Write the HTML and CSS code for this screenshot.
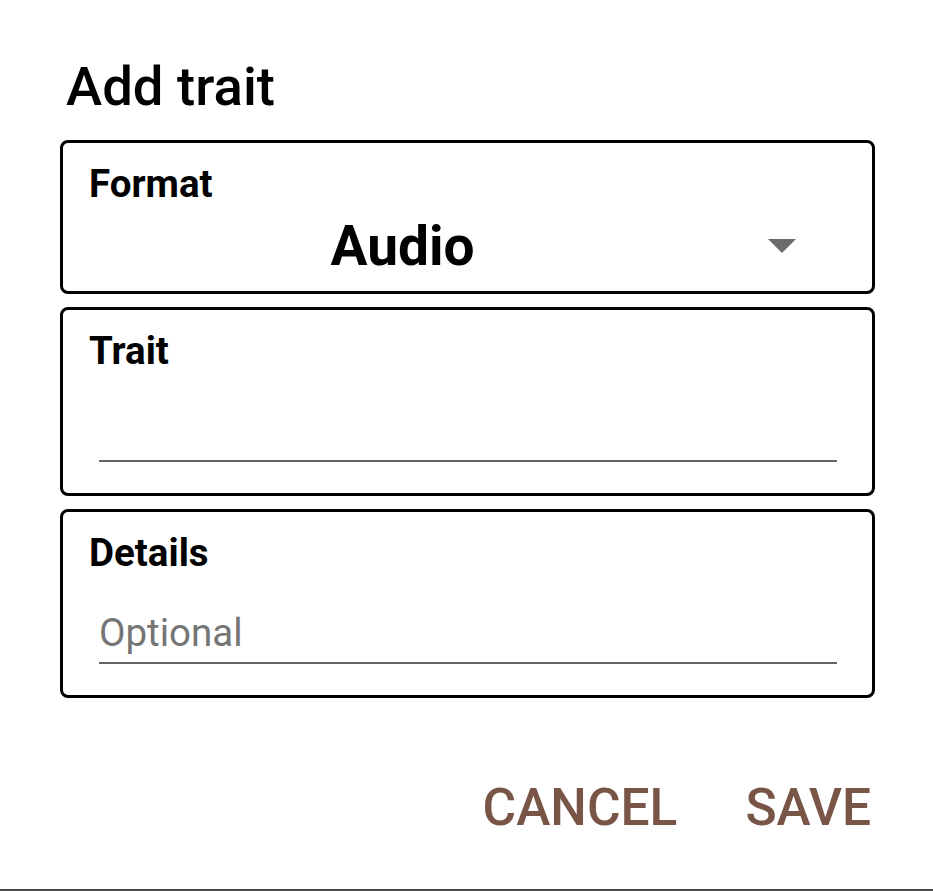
FILE: index.html
```html
<!DOCTYPE html>
<html>
<head>
<meta charset="utf-8">
<link rel="stylesheet" href="styles.css">
</head>
<body>
<div class="dialog">
  <h1 class="title">Add trait</h1>
  <div class="fields">
    <div class="card">
      <div class="label">Format</div>
      <div class="spinner">
        <div class="spinner-value">Audio</div>
        <div class="spinner-arrow">
          <svg width="28" height="14" viewBox="0 0 28 14"><path d="M0 0 H28 L14 14 Z" fill="#6b6b6b"/></svg>
        </div>
      </div>
    </div>
    <div class="card">
      <div class="label">Trait</div>
      <div class="input"><span class="input-text"></span></div>
    </div>
    <div class="card">
      <div class="label">Details</div>
      <div class="input"><span class="input-text placeholder">Optional</span></div>
    </div>
  </div>
  <div class="actions">
    <button class="btn">CANCEL</button>
    <button class="btn">SAVE</button>
  </div>
</div>
</body>
</html>
```
FILE: styles.css
```css
html, body {
  margin: 0;
  padding: 0;
  background: #ffffff;
}
body {
  height: 891px;
  box-sizing: border-box;
  border-bottom: 2px solid #4a4a4a;
  font-family: Roboto, "Liberation Sans", sans-serif;
  color: #000;
}
.dialog {
  padding: 55px 58px 0 60px;
  display: flex;
  flex-direction: column;
}
.title {
  margin: 0;
  font-size: 54.5px;
  line-height: 63px;
  font-weight: 500;
  color: #000;
  padding-left: 6px;
}
.fields {
  margin-top: 22px;
  display: flex;
  flex-direction: column;
  gap: 13px;
}
.card {
  border: 3px solid #000;
  border-radius: 8px;
  padding: 18px 26px 0 26px;
}
.label {
  font-size: 38.5px;
  line-height: 45px;
  font-weight: 700;
}
.spinner {
  display: flex;
  align-items: center;
  margin-top: 8px;
  margin-bottom: 13px;
  height: 64px;
}
.spinner-value {
  width: 627px;
  text-align: center;
  font-size: 55px;
  line-height: 64px;
  font-weight: 700;
}
.spinner-arrow {
  flex: 1;
  display: flex;
  justify-content: center;
  align-items: center;
  padding-left: 2px;
}
.spinner-arrow svg {
  display: block;
}
.input {
  margin: 35px 9px 31px 10px;
  padding-bottom: 7px;
  border-bottom: 2px solid #666666;
  height: 45px;
}
.input-text {
  display: block;
  font-size: 38.5px;
  line-height: 45px;
  font-weight: 400;
  height: 45px;
}
.placeholder {
  color: #757575;
}
.actions {
  display: flex;
  justify-content: flex-end;
  gap: 68px;
  margin-top: 80px;
  padding-right: 4px;
}
.btn {
  background: none;
  border: none;
  padding: 0;
  margin: 0;
  font-family: Roboto, "Liberation Sans", sans-serif;
  font-size: 51.5px;
  line-height: 60px;
  font-weight: 500;
  color: #795548;
}
```
